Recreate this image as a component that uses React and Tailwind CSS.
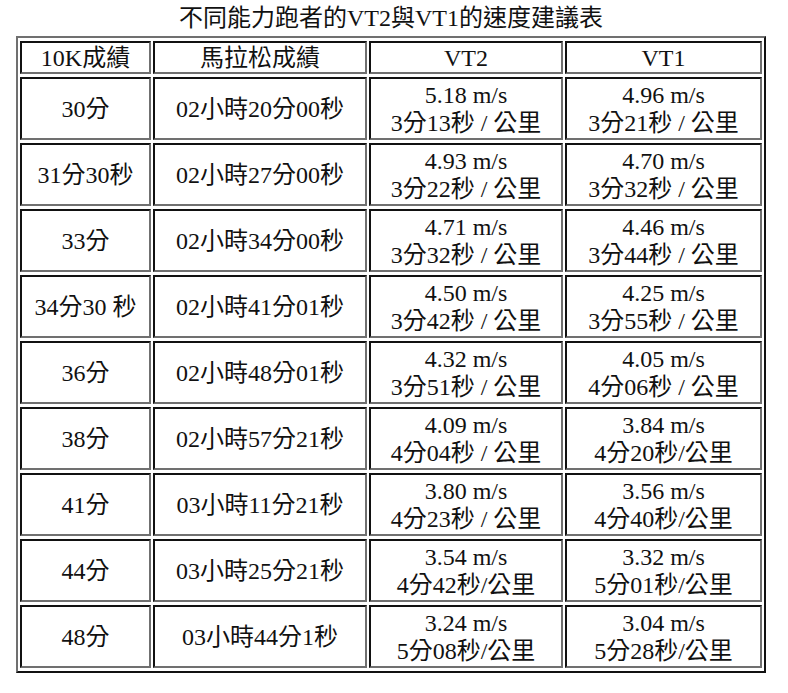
import React from 'react';

const rows = [
    ['30分', '02小時20分00秒', '5.18 m/s', '3分13秒 / 公里', '4.96 m/s', '3分21秒 / 公里'],
    ['31分30秒', '02小時27分00秒', '4.93 m/s', '3分22秒 / 公里', '4.70 m/s', '3分32秒 / 公里'],
    ['33分', '02小時34分00秒', '4.71 m/s', '3分32秒 / 公里', '4.46 m/s', '3分44秒 / 公里'],
    ['34分30 秒', '02小時41分01秒', '4.50 m/s', '3分42秒 / 公里', '4.25 m/s', '3分55秒 / 公里'],
    ['36分', '02小時48分01秒', '4.32 m/s', '3分51秒 / 公里', '4.05 m/s', '4分06秒 / 公里'],
    ['38分', '02小時57分21秒', '4.09 m/s', '4分04秒 / 公里', '3.84 m/s', '4分20秒/公里'],
    ['41分', '03小時11分21秒', '3.80 m/s', '4分23秒 / 公里', '3.56 m/s', '4分40秒/公里'],
    ['44分', '03小時25分21秒', '3.54 m/s', '4分42秒/公里', '3.32 m/s', '5分01秒/公里'],
    ['48分', '03小時44分1秒', '3.24 m/s', '5分08秒/公里', '3.04 m/s', '5分28秒/公里'],
];

const cell = 'p-0 text-center align-middle border-2 border-t-[#111] border-l-[#111] border-r-[#707070] border-b-[#707070]';

export default function App() {
    return (
        <div className="bg-white min-h-screen text-[#111] font-['Liberation_Serif','Noto_Sans_CJK_TC',serif] text-[24px] leading-[28px]">
            <div className="w-[750px] ml-[16px]">
                <div className="h-[36px] pt-[4px] text-center">不同能力跑者的VT2與VT1的速度建議表</div>
                <table className="w-[750px] table-fixed border-separate border-spacing-x-[2px] border-spacing-y-[3px] border-2 border-t-[#707070] border-l-[#707070] border-r-[#111] border-b-[#111]">
                    <colgroup>
                        <col className="w-[131px]" />
                        <col className="w-[214px]" />
                        <col className="w-[194px]" />
                        <col className="w-[197px]" />
                    </colgroup>
                    <thead>
                        <tr className="h-[33px]">
                            <th className={`${cell} font-normal`}>10K成績</th>
                            <th className={`${cell} font-normal`}>馬拉松成績</th>
                            <th className={`${cell} font-normal`}>VT2</th>
                            <th className={`${cell} font-normal`}>VT1</th>
                        </tr>
                    </thead>
                    <tbody>
                        {rows.map(r => (
                            <tr key={r[0]} className="h-[63px]">
                                <td className={cell}>{r[0]}</td>
                                <td className={cell}>{r[1]}</td>
                                <td className={cell}>
                                    <div>{r[2]}</div>
                                    <div>{r[3]}</div>
                                </td>
                                <td className={cell}>
                                    <div>{r[4]}</div>
                                    <div>{r[5]}</div>
                                </td>
                            </tr>
                        ))}
                    </tbody>
                </table>
            </div>
        </div>
    );
}
